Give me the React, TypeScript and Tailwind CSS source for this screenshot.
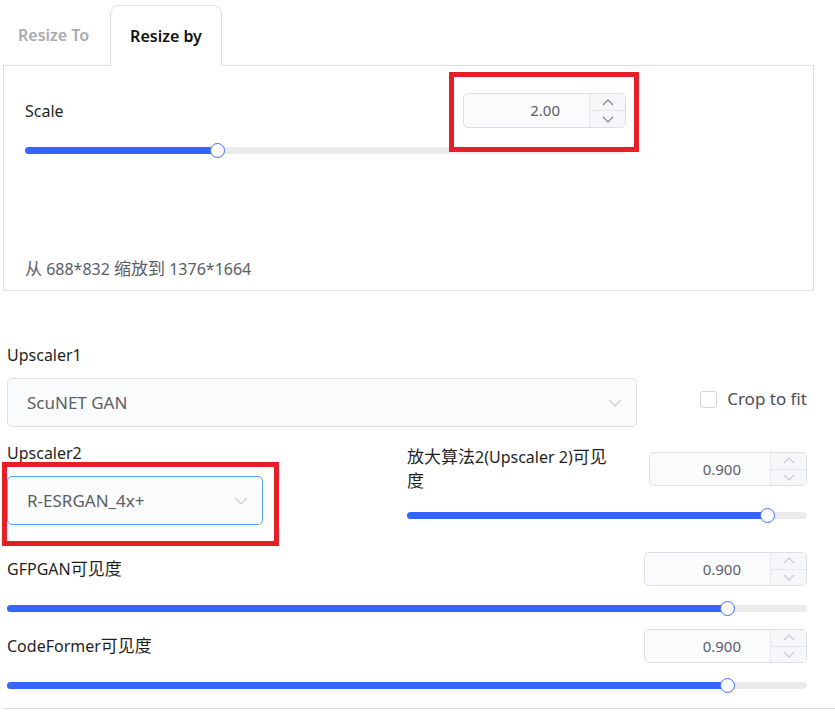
import React from 'react';

const font = { fontFamily: '"Noto Sans", "Noto Sans CJK SC", sans-serif' };

function Chevron({ dir, className }: { dir: 'up' | 'down'; className?: string }) {
  return (
    <svg width="12" height="7" viewBox="0 0 12 7" fill="none" className={className}>
      <polyline
        points={dir === 'up' ? '1,6 6,1 11,6' : '1,1 6,6 11,1'}
        stroke="currentColor"
        strokeWidth="1.1"
      />
    </svg>
  );
}

function NumberBox({ value, w, h, dark }: { value: string; w: string; h: string; dark?: boolean }) {
  return (
    <div className={`flex ${w} ${h} rounded-[5px] border border-[#dcdfe6] bg-[#fafbfd] overflow-hidden`}>
      <div className="flex-1 flex items-center justify-end pr-[29px] text-[15px] text-[#5a5e66]">{value}</div>
      <div
        className={`w-[36px] flex flex-col border-l border-[#e4e6eb] bg-[#f6f7f9] ${dark ? 'text-[#7a7e86]' : 'text-[#c6c9cf]'}`}
      >
        <div className="flex-1 flex items-center justify-center border-b border-[#e4e6eb]">
          <Chevron dir="up" />
        </div>
        <div className="flex-1 flex items-center justify-center">
          <Chevron dir="down" />
        </div>
      </div>
    </div>
  );
}

function Slider({ pct, className }: { pct: number; className?: string }) {
  return (
    <div className={`relative h-[14px] flex items-center ${className ?? ''}`}>
      <div className="w-full h-[7px] rounded-full bg-[#ebebeb]" />
      <div className="absolute left-0 h-[7px] rounded-full bg-[#3366ff]" style={{ width: `${pct}%` }} />
      <div
        className="absolute w-[15px] h-[15px] rounded-full bg-white border-[1.5px] border-[#3f6fff]"
        style={{ left: `calc(${pct}% - 7.5px)` }}
      />
    </div>
  );
}

function Select({ value, focused, w }: { value: string; focused?: boolean; w: string }) {
  return (
    <div
      className={`${w} h-[49px] rounded-[5px] border bg-[#fafbfd] flex items-center justify-between pl-[19px] pr-[14px] text-[17px] text-[#5a5e66] ${
        focused ? 'border-[#5aa2ff]' : 'border-[#dcdfe6]'
      }`}
    >
      <span>{value}</span>
      <Chevron dir="down" className="text-[#c6c9cf] w-[14px] h-[8px]" />
    </div>
  );
}

// CJK glyphs are a little larger in the reference
function Zh({ children }: { children: React.ReactNode }) {
  return <span className="text-[17px]">{children}</span>;
}

export default function App() {
  return (
    <div className="relative w-[835px] h-[712px] bg-white overflow-hidden text-[#1f1f1f]" style={font}>
      {/* resize tabs + panel */}
      <div className="ml-[3px] w-[811px]">
        <div className="flex items-end h-[66px] border-b border-[#dcdfe6]">
          <div className="w-[107px] h-[60px] pl-[15px] flex items-center text-[16px] font-semibold text-[#a9abaf]">
            Resize To
          </div>
          <div className="w-[112px] h-[61px] -mb-px rounded-t-[9px] border border-b-0 border-[#dcdfe6] bg-white flex items-center justify-center text-[16px] font-semibold text-[#111]">
            Resize by
          </div>
        </div>
        <div className="border-x border-b border-[#dcdfe6] pl-[21px] pt-[27px] pb-[9px]">
          <div className="w-[601px]">
            <div className="flex items-center justify-between h-[35px]">
              <span className="text-[16px]">Scale</span>
              <NumberBox value="2.00" w="w-[163px]" h="h-[35px]" dark />
            </div>
            <Slider pct={32} className="mt-[15px]" />
          </div>
          <div className="mt-[100px] text-[16px] leading-[24px] text-[#5a5e66]">
            <Zh>从</Zh> 688*832 <Zh>缩放到</Zh> 1376*1664
          </div>
        </div>
      </div>

      {/* upscaler options */}
      <div className="ml-[7px] w-[800px] mt-[52px]">
        <div className="flex items-end">
          <div className="w-[630px]">
            <div className="text-[16px] leading-[24px]">Upscaler1</div>
            <div className="mt-[11px]">
              <Select value="ScuNET GAN" w="w-[630px]" />
            </div>
          </div>
          <div className="flex-1 flex justify-end items-center gap-[10px] mb-[16px]">
            <div className="w-[17px] h-[17px] rounded-[3px] border border-[#d4d7dd] bg-white" />
            <span className="text-[17px] leading-[24px] text-[#4a4d55]">Crop to fit</span>
          </div>
        </div>

        <div className="flex items-start mt-[14px]">
          <div className="w-[256px]">
            <div className="text-[16px] leading-[24px]">Upscaler2</div>
            <div className="mt-[11px]">
              <Select value="R-ESRGAN_4x+" w="w-[256px]" focused />
            </div>
          </div>
          <div className="ml-[144px] w-[400px] mt-[4px]">
            <div className="flex items-center justify-between">
              <div className="text-[16px] leading-[23px] whitespace-nowrap">
                <Zh>放大算法</Zh>2(Upscaler 2)<Zh>可见</Zh>
                <br />
                <Zh>度</Zh>
              </div>
              <NumberBox value="0.900" w="w-[158px]" h="h-[34px]" />
            </div>
            <Slider pct={90} className="mt-[15px]" />
          </div>
        </div>

        <div className="mt-[27px]">
          <div className="flex items-center justify-between h-[34px]">
            <span className="text-[16px]">
              GFPGAN<Zh>可见度</Zh>
            </span>
            <NumberBox value="0.900" w="w-[163px]" h="h-[34px]" />
          </div>
          <Slider pct={90} className="mt-[15px]" />
        </div>

        <div className="mt-[14px]">
          <div className="flex items-center justify-between h-[34px]">
            <span className="text-[16px]">
              CodeFormer<Zh>可见度</Zh>
            </span>
            <NumberBox value="0.900" w="w-[163px]" h="h-[34px]" />
          </div>
          <Slider pct={90} className="mt-[15px]" />
        </div>
      </div>
      <div className="ml-[3px] mt-[16px] border-t border-[#dcdfe6]" />

      {/* red annotation boxes */}
      <div className="absolute left-[449px] top-[72px] w-[190px] h-[80px] border-[5px] border-[#e61e25]" />
      <div className="absolute left-[2px] top-[462px] w-[277px] h-[84px] border-[5px] border-[#e61e25]" />
    </div>
  );
}
